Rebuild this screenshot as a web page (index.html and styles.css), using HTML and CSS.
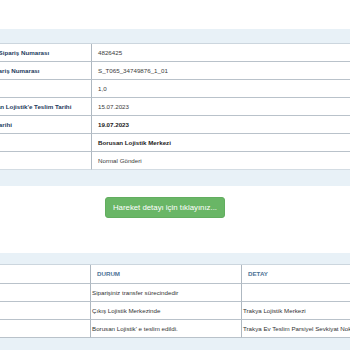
FILE: index.html
```html
<!DOCTYPE html>
<html lang="tr">
<head>
<meta charset="utf-8">
<link rel="stylesheet" href="styles.css">
</head>
<body>
<div class="page">
  <section class="panel panel-info">
    <table class="info">
      <tr><td class="label">Kargo Sipariş Numarası</td><td class="value">4826425</td></tr>
      <tr><td class="label">Alt Sipariş Numarası</td><td class="value">S_T065_34749876_1_01</td></tr>
      <tr><td class="label">Desi</td><td class="value">1,0</td></tr>
      <tr><td class="label">Borusan Lojistik'e Teslim Tarihi</td><td class="value">15.07.2023</td></tr>
      <tr><td class="label">Varış Tarihi</td><td class="value strong">19.07.2023</td></tr>
      <tr><td class="label">Şube</td><td class="value strong">Borusan Lojistik Merkezi</td></tr>
      <tr><td class="label">Tip</td><td class="value">Normal Gönderi</td></tr>
    </table>
  </section>
  <div class="actions">
    <button class="btn" type="button">Hareket detayı için tıklayınız...</button>
  </div>
  <section class="panel panel-moves">
    <table class="moves">
      <tr class="head"><th class="c-date"></th><th class="c-state">DURUM</th><th class="c-detail">DETAY</th></tr>
      <tr><td></td><td>Siparişiniz transfer sürecindedir</td><td></td></tr>
      <tr><td></td><td>Çıkış Lojistik Merkezinde</td><td>Trakya Lojistik Merkezi</td></tr>
      <tr><td></td><td>Borusan Lojistik' e teslim edildi.</td><td>Trakya Ev Teslim Parsiyel Sevkiyat Noktası</td></tr>
    </table>
  </section>
</div>
</body>
</html>
```
FILE: styles.css
```css
html, body {
  margin: 0;
  padding: 0;
  overflow: hidden;
  background: #ffffff;
}
body {
  font-family: "Liberation Sans", Arial, sans-serif;
  color: #333333;
}
.page {
  width: 380px;
  margin-left: -25px;
  padding-top: 29px;
}
.panel {
  background: #e8f1f7;
}
.panel-info {
  padding: 14px 0 16px;
}
.panel-moves {
  padding: 11px 0 16px;
}
table {
  width: 100%;
  border-collapse: separate;
  border-spacing: 0;
  background: #ffffff;
  border-top: 1px solid #ccd6de;
  table-layout: fixed;
}
td, th {
  box-sizing: border-box;
  padding: 0;
  height: 18px;
  line-height: 17px;
  font-size: 6.2px;
  white-space: nowrap;
  overflow: visible;
  text-align: left;
  border-bottom: 1px solid #b9c2ca;
  vertical-align: middle;
}
.info .label {
  width: 117px;
  padding-left: 4px;
  font-weight: bold;
  color: #1d3a5c;
  border-right: 1px solid #aeb8c1;
}
.info .value {
  padding-left: 6px;
  color: #3a3a3a;
}
.info .strong {
  font-weight: bold;
  color: #222222;
}
.info tr:last-child td {
  border-bottom: 1px solid #d3dce3;
}
.actions {
  display: flex;
  justify-content: center;
  padding: 11px 0 35px;
}
.btn {
  width: 120px;
  height: 21px;
  padding: 0;
  border: 1px solid #62ad5f;
  border-radius: 3px;
  background: #69b666;
  color: #ffffff;
  font-family: "Liberation Sans", Arial, sans-serif;
  font-size: 7.8px;
  line-height: 19px;
}
.moves .c-date {
  width: 116px;
}
.moves .c-state {
  width: 151px;
}
.moves th {
  height: 19px;
  line-height: 18px;
  font-weight: bold;
  color: #4d7396;
  padding-left: 6px;
}
.moves td {
  padding-left: 1px;
  color: #333333;
  overflow: hidden;
}
.moves td:first-child,
.moves th:first-child,
.moves td:nth-child(2),
.moves th:nth-child(2) {
  border-right: 1px solid #aeb8c1;
}
```
